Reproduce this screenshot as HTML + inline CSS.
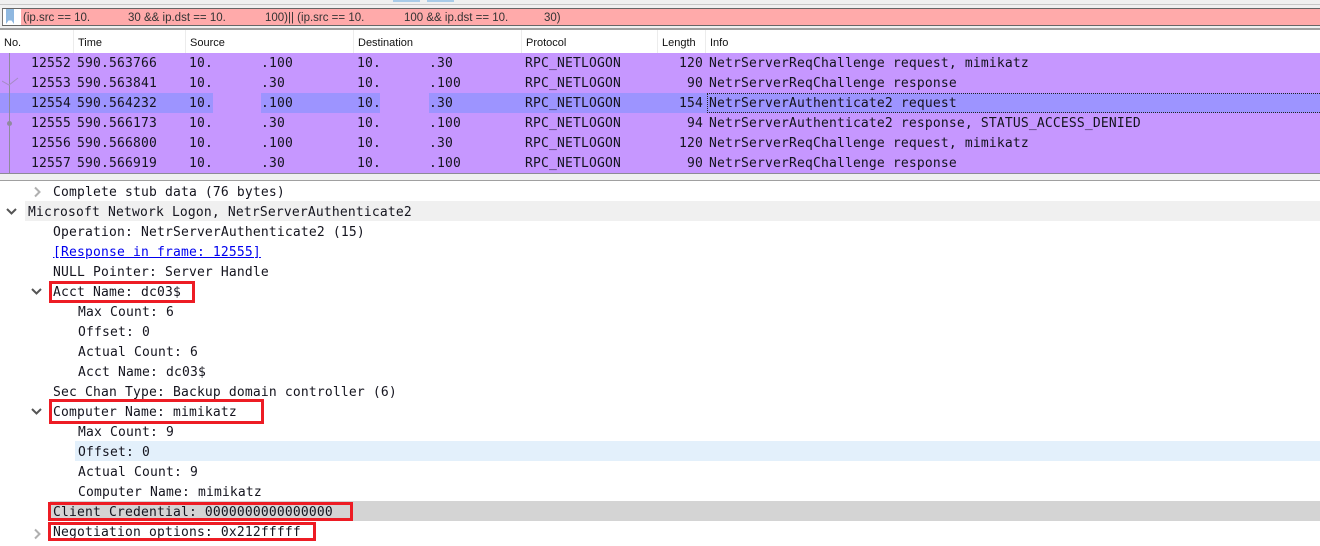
<!DOCTYPE html>
<html><head><meta charset="utf-8">
<style>
html,body{margin:0;padding:0;background:#fff}
#p{position:relative;width:1320px;height:546px;overflow:hidden;background:#fff;font-family:"DejaVu Sans Mono","Liberation Mono",monospace;font-size:13px;letter-spacing:.17px;color:#14141e}
#p div{position:absolute}
.t{white-space:pre;line-height:22px;height:20px}
.d{line-height:24px}
.h{font-family:"Liberation Sans",sans-serif;font-size:11px;letter-spacing:0;line-height:14px;top:36px;color:#111;white-space:pre}
.f{font-family:"Liberation Sans",sans-serif;font-size:11.5px;letter-spacing:0;line-height:14px;top:11px;color:#333;white-space:pre}
.s{top:30px;width:1px;height:23px;background:#ececec}
.b{border:3px solid #ed1c24;box-sizing:border-box}
</style></head><body><div id="p">
<div style="left:0;top:0;width:1320px;height:28px;background:#f0f0f0"></div>
<div style="left:0;top:4px;width:1320px;height:1px;background:#c8c8c8"></div>
<div style="left:393px;top:0;width:27px;height:2px;background:#a9cbe8"></div>
<div style="left:427px;top:0;width:27px;height:2px;background:#a9cbe8"></div>
<div style="left:2px;top:8px;width:1318px;height:18px;background:#ffaaaa;border-top:1px solid #666;border-bottom:1px solid #666;box-sizing:border-box"></div>
<div style="left:2px;top:9px;width:18px;height:16px;background:#fff;border-left:1px solid #777"></div>
<svg style="position:absolute;left:6px;top:9px" width="9" height="15"><path d="M0 0H8V15L5.5 11.5H2.5L0 15Z" fill="#8fb8e0"/></svg>
<div class="f" style="left:23px">(ip.src == 10.</div>
<div class="f" style="left:128px">30 &amp;&amp; ip.dst == 10.</div>
<div class="f" style="left:265px">100)|| (ip.src == 10.</div>
<div class="f" style="left:404px">100 &amp;&amp; ip.dst == 10.</div>
<div class="f" style="left:544px">30)</div>
<div style="left:0;top:28px;width:1320px;height:2px;background:#a0a0a0"></div>

<div class="h" style="left:4px">No.</div>
<div class="h" style="left:78px">Time</div>
<div class="h" style="left:190px">Source</div>
<div class="h" style="left:358px">Destination</div>
<div class="h" style="left:526px">Protocol</div>
<div class="h" style="left:662px">Length</div>
<div class="h" style="left:710px">Info</div>
<div class="s" style="left:73px"></div>
<div class="s" style="left:185px"></div>
<div class="s" style="left:353px"></div>
<div class="s" style="left:521px"></div>
<div class="s" style="left:657px"></div>
<div class="s" style="left:705px"></div>

<div style="left:0;top:53px;width:1320px;height:120px;background:#c697ff"></div>
<div style="left:0;top:93px;width:213px;height:20px;background:#9d94ff"></div>
<div style="left:261px;top:93px;width:119px;height:20px;background:#9d94ff"></div>
<div style="left:429px;top:93px;width:891px;height:20px;background:#9d94ff"></div>
<div style="left:707px;top:93px;width:613px;height:20px;box-sizing:border-box;border:1px dotted #222;border-right:0"></div>
<div style="left:9px;top:53px;width:1px;height:120px;background:#8f8a9e"></div>
<div style="left:7px;top:121px;width:5px;height:5px;border-radius:50%;background:#8f8a9e"></div>
<svg style="position:absolute;left:2px;top:76px" width="17" height="11"><path d="M0 5L7 9L16 2" fill="none" stroke="#a58bc4" stroke-width="1"/></svg>
<div style="left:0;top:173px;width:1320px;height:1px;background:#8d8a96"></div>
<div style="left:0;top:174px;width:1320px;height:6px;background:#f0f0f0"></div>
<div style="left:0;top:180px;width:1320px;height:1px;background:#a0a0a0"></div>

<div class="t" style="left:31px;top:53px">12552</div><div class="t" style="left:77px;top:53px">590.563766</div><div class="t" style="left:189px;top:53px">10.</div><div class="t" style="left:261px;top:53px">.100</div><div class="t" style="left:357px;top:53px">10.</div><div class="t" style="left:429px;top:53px">.30</div><div class="t" style="left:525px;top:53px">RPC_NETLOGON</div><div class="t" style="left:679px;top:53px">120</div><div class="t" style="left:709px;top:53px">NetrServerReqChallenge request, mimikatz</div>
<div class="t" style="left:31px;top:73px">12553</div><div class="t" style="left:77px;top:73px">590.563841</div><div class="t" style="left:189px;top:73px">10.</div><div class="t" style="left:261px;top:73px">.30</div><div class="t" style="left:357px;top:73px">10.</div><div class="t" style="left:429px;top:73px">.100</div><div class="t" style="left:525px;top:73px">RPC_NETLOGON</div><div class="t" style="left:687px;top:73px">90</div><div class="t" style="left:709px;top:73px">NetrServerReqChallenge response</div>
<div class="t" style="left:31px;top:93px">12554</div><div class="t" style="left:77px;top:93px">590.564232</div><div class="t" style="left:189px;top:93px">10.</div><div class="t" style="left:261px;top:93px">.100</div><div class="t" style="left:357px;top:93px">10.</div><div class="t" style="left:429px;top:93px">.30</div><div class="t" style="left:525px;top:93px">RPC_NETLOGON</div><div class="t" style="left:679px;top:93px">154</div><div class="t" style="left:709px;top:93px">NetrServerAuthenticate2 request</div>
<div class="t" style="left:31px;top:113px">12555</div><div class="t" style="left:77px;top:113px">590.566173</div><div class="t" style="left:189px;top:113px">10.</div><div class="t" style="left:261px;top:113px">.30</div><div class="t" style="left:357px;top:113px">10.</div><div class="t" style="left:429px;top:113px">.100</div><div class="t" style="left:525px;top:113px">RPC_NETLOGON</div><div class="t" style="left:687px;top:113px">94</div><div class="t" style="left:709px;top:113px">NetrServerAuthenticate2 response, STATUS_ACCESS_DENIED</div>
<div class="t" style="left:31px;top:133px">12556</div><div class="t" style="left:77px;top:133px">590.566800</div><div class="t" style="left:189px;top:133px">10.</div><div class="t" style="left:261px;top:133px">.100</div><div class="t" style="left:357px;top:133px">10.</div><div class="t" style="left:429px;top:133px">.30</div><div class="t" style="left:525px;top:133px">RPC_NETLOGON</div><div class="t" style="left:679px;top:133px">120</div><div class="t" style="left:709px;top:133px">NetrServerReqChallenge request, mimikatz</div>
<div class="t" style="left:31px;top:153px">12557</div><div class="t" style="left:77px;top:153px">590.566919</div><div class="t" style="left:189px;top:153px">10.</div><div class="t" style="left:261px;top:153px">.30</div><div class="t" style="left:357px;top:153px">10.</div><div class="t" style="left:429px;top:153px">.100</div><div class="t" style="left:525px;top:153px">RPC_NETLOGON</div><div class="t" style="left:687px;top:153px">90</div><div class="t" style="left:709px;top:153px">NetrServerReqChallenge response</div>

<div style="left:25px;top:201px;width:1295px;height:20px;background:#f0f0f0"></div>
<div style="left:75px;top:441px;width:1245px;height:20px;background:#e3f0fb"></div>
<div style="left:50px;top:501px;width:1270px;height:20px;background:#d4d4d4"></div>

<div class="t d" style="left:53px;top:181px">Complete stub data (76 bytes)</div>
<div class="t d" style="left:28px;top:201px">Microsoft Network Logon, NetrServerAuthenticate2</div>
<div class="t d" style="left:53px;top:221px">Operation: NetrServerAuthenticate2 (15)</div>
<div class="t d" style="left:53px;top:241px;color:#0000ee;text-decoration:underline">[Response in frame: 12555]</div>
<div class="t d" style="left:53px;top:261px">NULL Pointer: Server Handle</div>
<div class="t d" style="left:53px;top:281px">Acct Name: dc03$</div>
<div class="t d" style="left:78px;top:301px">Max Count: 6</div>
<div class="t d" style="left:78px;top:321px">Offset: 0</div>
<div class="t d" style="left:78px;top:341px">Actual Count: 6</div>
<div class="t d" style="left:78px;top:361px">Acct Name: dc03$</div>
<div class="t d" style="left:53px;top:381px">Sec Chan Type: Backup domain controller (6)</div>
<div class="t d" style="left:53px;top:401px">Computer Name: mimikatz</div>
<div class="t d" style="left:78px;top:421px">Max Count: 9</div>
<div class="t d" style="left:78px;top:441px">Offset: 0</div>
<div class="t d" style="left:78px;top:461px">Actual Count: 9</div>
<div class="t d" style="left:78px;top:481px">Computer Name: mimikatz</div>
<div class="t d" style="left:53px;top:501px">Client Credential: 0000000000000000</div>
<div class="t d" style="left:53px;top:521px">Negotiation options: 0x212fffff</div>

<svg style="position:absolute;left:0;top:181px" width="50" height="360" fill="none" stroke-width="2">
<path d="M35 6.5L39.5 11L35 15.5" stroke="#b0b0b0"/>
<path d="M7 28L11.5 32.5L16 28" stroke="#555"/>
<path d="M32 108L36.5 112.5L41 108" stroke="#555"/>
<path d="M32 228L36.5 232.5L41 228" stroke="#555"/>
<path d="M35 348.5L39.5 353L35 357.5" stroke="#b0b0b0"/>
</svg>

<div class="b" style="left:49px;top:281px;width:146px;height:22px"></div>
<div class="b" style="left:49px;top:399px;width:215px;height:25px"></div>
<div class="b" style="left:48px;top:502px;width:305px;height:19px"></div>
<div class="b" style="left:48px;top:522px;width:268px;height:19px"></div>
</div></body></html>
